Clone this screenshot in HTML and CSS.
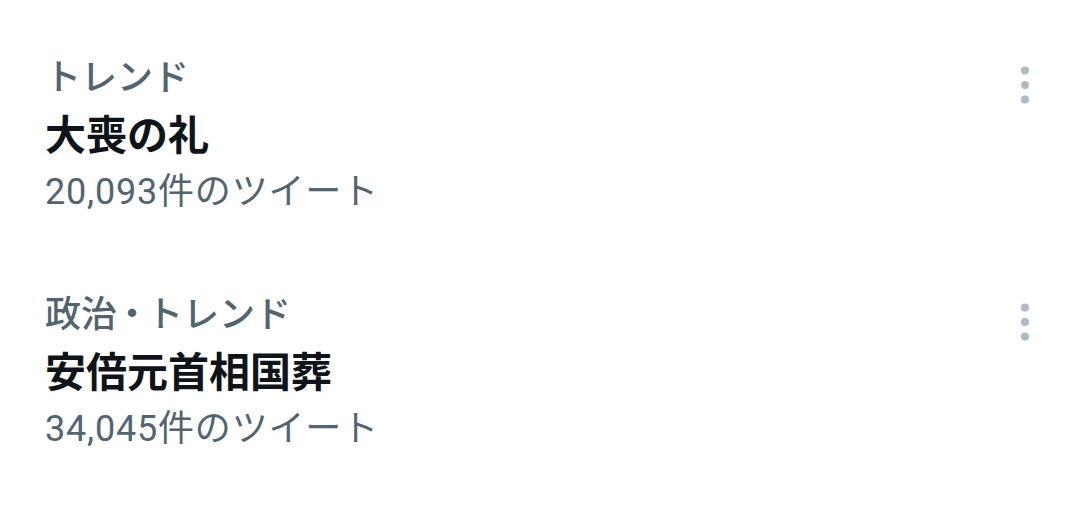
FILE: index.html
```html
<!DOCTYPE html>
<html lang="ja">
  <head>
    <meta charset="utf-8">
    <meta name="viewport" content="width=device-width, initial-scale=1">
    <title>トレンド</title>
    <link rel="stylesheet" href="styles.css">
  </head>
  <body>
    <div class="trends">
      <div class="trend">
        <div class="info">
          <div class="label">トレンド</div>
          <div class="title">大喪の礼</div>
          <div class="count">20,093件のツイート</div>
        </div>
        <svg class="more" viewBox="0 0 40 40" width="40" height="40">
          <circle cx="20" cy="5.5" r="4"/>
          <circle cx="20" cy="20" r="4"/>
          <circle cx="20" cy="34.5" r="4"/>
        </svg>
      </div>
      <div class="trend">
        <div class="info">
          <div class="label">政治<span class="sep">・</span>トレンド</div>
          <div class="title">安倍元首相国葬</div>
          <div class="count">34,045件のツイート</div>
        </div>
        <svg class="more" viewBox="0 0 40 40" width="40" height="40">
          <circle cx="20" cy="5.5" r="4"/>
          <circle cx="20" cy="20" r="4"/>
          <circle cx="20" cy="34.5" r="4"/>
        </svg>
      </div>
    </div>
  </body>
</html>
```

FILE: styles.css
```css
body {
  margin: 0;
  background: #fff;
  font-family: Roboto, "Noto Sans CJK JP", sans-serif;
}

.trends {
  padding-top: 17px;
}

.trend {
  display: flex;
  align-items: flex-start;
  padding: 39px 35px 40px 45px;
}

.info {
  flex: 1;
}

.label,
.count {
  font-size: 36px;
  line-height: 44px;
  color: #536471;
}

.label {
  font-weight: 500;
}

.sep {
  font-feature-settings: "palt";
  padding: 0 6px;
}

.title {
  font-size: 41px;
  line-height: 56px;
  font-weight: 700;
  color: #0f1419;
  padding-top: 8px;
}

.count {
  margin-top: 6px;
  letter-spacing: 0.8px;
}

.more {
  fill: #abbac5;
  margin-top: 9px;
}
```
